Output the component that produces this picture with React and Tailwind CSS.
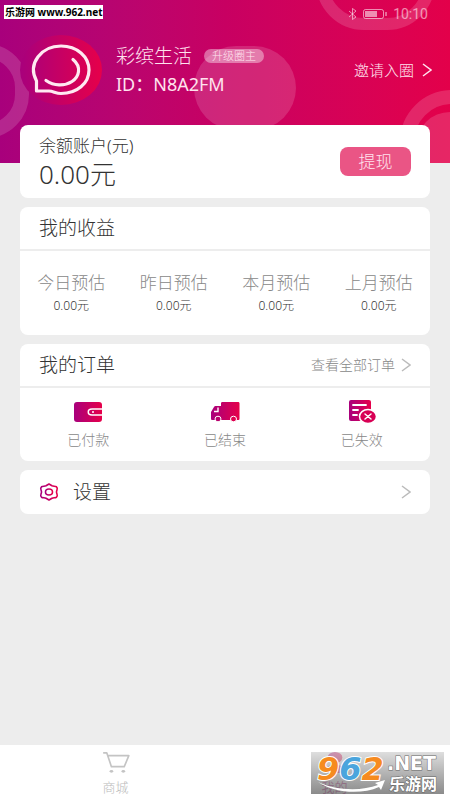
const earnings = [
  { label: "今日预估", value: "0.00元" },
  { label: "昨日预估", value: "0.00元" },
  { label: "本月预估", value: "0.00元" },
  { label: "上月预估", value: "0.00元" },
]

const Gradients = () => (
  <svg className="absolute h-0 w-0" aria-hidden="true">
    <defs>
      <linearGradient id="brand" x1="0" y1="0" x2="1" y2="0">
        <stop offset="0" stopColor="#a8007c" />
        <stop offset="1" stopColor="#e6004a" />
      </linearGradient>
    </defs>
  </svg>
)

const Avatar = () => (
  <svg className="h-[70px] w-[82px] shrink-0" viewBox="0 0 82 70" fill="none">
    <ellipse cx="41" cy="35" rx="41" ry="35" fill="url(#brand)" />
    <path
      d="M16.500 56V46C7 28 22 11 41 11c16 0 28 10.500 28 24S57 58.500 41 58.500c-5 0-8-2.500-12-2.500z"
      stroke="#ffe9f1"
      strokeWidth="3.200"
      strokeLinejoin="round"
    />
    <path d="M53 24.500C62 32 59 42 52 46.500 44 51.500 34 51 26 45.500" stroke="#ffe9f1" strokeWidth="3.200" strokeLinecap="round" />
  </svg>
)

const WalletIcon = () => (
  <svg className="h-6 w-8" viewBox="0 0 32 24" fill="none">
    <rect x="2" y="2" width="28" height="20" rx="3" fill="url(#brand)" />
    <path d="M31 9H20c-5 0-5 6 0 6h11" stroke="#fff" strokeWidth="1.5" />
    <circle cx="21" cy="12" r="1" fill="#fff" />
  </svg>
)

const TruckIcon = () => (
  <svg className="h-6 w-8" viewBox="0 0 32 24">
    <path
      d="M13.500 2h15.500c1 0 1.500 .5 1.500 1.500v15c0 1-.5 1.500-1.500 1.500H3.500c-1 0-1.500-.5-1.500-1.500V12L5 7c.5-.7 1-1 2-1h5V3.500C12 2.500 12.500 2 13.500 2z"
      fill="url(#brand)"
    />
    <path d="M9 7.500v4H5" fill="none" stroke="#fff" strokeWidth="1.4" />
    <ellipse cx="9" cy="19" rx="3" ry="2.800" fill="#b8006c" stroke="#fff" />
    <ellipse cx="24.500" cy="19" rx="3" ry="2.800" fill="#df004f" stroke="#fff" />
  </svg>
)

const InvalidIcon = () => (
  <svg className="h-6 w-8" viewBox="0 0 32 24" fill="none">
    <rect x="3" y="0" width="22" height="21" rx="2" fill="url(#brand)" />
    <path d="M7 5h13M7 10h5M7 15h4" stroke="#fff" strokeWidth="1.8" strokeLinecap="round" />
    <ellipse cx="22" cy="16.500" rx="8.500" ry="7" fill="#d80054" stroke="#fff" strokeWidth="1.5" />
    <path d="M19 14l6 5M25 14l-6 5" stroke="#fff" strokeWidth="1.5" strokeLinecap="round" />
  </svg>
)

const SettingsIcon = () => (
  <svg className="h-[18px] w-5" viewBox="0 0 20 18" fill="none" stroke="url(#brand)" strokeWidth="1.6">
    <path
      d="M10 1l3 1.800c1.500.7 3 .2 4.500 1C19.500 5.500 17.500 7 17.500 9s2 3.500 0 5.200c-1.500.8-3 .3-4.500 1L10 17l-3-1.800c-1.500-.7-3-.2-4.500-1C.5 12.500 2.500 11 2.500 9s-2-3.500 0-5.200c1.500-.8 3-.3 4.500-1z"
      strokeLinejoin="round"
    />
    <ellipse cx="10" cy="9" rx="3.500" ry="3" />
  </svg>
)

const orders = [
  { label: "已付款", Icon: WalletIcon },
  { label: "已结束", Icon: TruckIcon },
  { label: "已失效", Icon: InvalidIcon },
]

const Arrow = ({ className }) => (
  <svg className={className} viewBox="0 0 10 14" fill="none" stroke="currentColor" strokeWidth="1.5">
    <path d="M1 1l8 6-8 6" />
  </svg>
)

const Header = () => (
  <header className="relative h-[163px] overflow-hidden bg-linear-to-r from-[#a8007c] via-[#c80062] to-[#e3004a] text-[#ffe3ee]">
    {/* Decorative rings */}
    <div className="absolute -left-[58px] top-[44px] h-[94px] w-[87px] rounded-full border-[14px] border-white/15"></div>
    <div className="absolute left-[194px] top-[46px] h-[84px] w-[102px] rounded-full bg-white/15"></div>
    <div className="absolute -top-[66px] right-[15px] h-[96px] w-[119px] rounded-full border-[12px] border-white/15"></div>
    <div className="absolute -right-[54px] top-[90px] h-[110px] w-[104px] rounded-full border-[14px] border-white/15"></div>
    <div className="absolute -right-[34px] top-[112px] h-[70px] w-[68px] rounded-full bg-white/15"></div>

    {/* Status bar */}
    <div className="relative flex h-7 items-center justify-end pr-[22px] text-white/55">
      <svg className="mr-[6px] h-3 w-[9px]" viewBox="0 0 9 12" fill="none" stroke="currentColor">
        <path d="M1 3l7 6-3.500 2.500V.5L8 3 1 9" />
      </svg>
      <svg className="mr-[6px] h-[10px] w-6" viewBox="0 0 24 10" fill="none" stroke="currentColor">
        <rect x=".5" y=".5" width="20" height="9" rx="2" />
        <rect x="2" y="2" width="12" height="6" fill="currentColor" stroke="none" />
        <path d="M23 3v4" strokeWidth="1.500" />
      </svg>
      <span className="font-[Roboto] text-sm font-normal">10:10</span>
    </div>

    {/* Profile */}
    <div className="relative flex items-center pl-5 pr-[18px] pt-[7px]">
      <Avatar />
      <div className="ml-[14px] min-w-0 flex-1">
        <div className="flex items-center">
          <h1 className="text-[19px] leading-7">彩缤生活</h1>
          <button className="ml-3 h-[14px] rounded-full bg-white/40 px-2 text-[11px] leading-[14px]">升级圈主</button>
        </div>
        <p className="text-[18px] font-normal leading-7">ID：N8A2FM</p>
      </div>
      <a href="#invite" className="flex items-center text-[15px]">
        邀请入圈
        <Arrow className="ml-2 h-[14px] w-[10px]" />
      </a>
    </div>
  </header>
)

const Watermark = () => (
  <div className="absolute bottom-[6px] right-[6px] h-[42px] w-[133px] bg-linear-to-b from-[#d0d0d0]/70 to-[#777]/85">
    <svg className="h-full w-full overflow-visible" viewBox="0 0 133 42" fontFamily="DejaVu Sans, Noto Sans CJK SC, sans-serif" fontWeight="bold">
      <text x="6" y="28" fontSize="32" fontStyle="italic" fill="#f68b1f" stroke="#fff" strokeWidth="2" paintOrder="stroke">
        9<tspan fill="#4aa5dd">6</tspan>2
      </text>
      <g fill="#fff" stroke="#666" strokeWidth="1" paintOrder="stroke">
        <text x="76" y="18" fontSize="19">.NET</text>
        <text x="78" y="38" fontSize="16">乐游网</text>
      </g>
      <path d="M7 30c19 9 44 9 60 3l-3-2 10-3-4 10-2-3c-18 8-45 6-61-5z" fill="#fff" />
    </svg>
  </div>
)

const TabBar = () => (
  <nav className="relative flex h-[55px] bg-white pt-[7px] text-[13px] leading-[26px]">
    <a href="#mall" className="flex flex-1 flex-col items-center pl-[6px] text-[#bbb]">
      <svg className="h-6 w-[30px]" viewBox="0 0 30 24" fill="none" stroke="#c4c4c4" strokeWidth="1.8">
        <path d="M1 1h4l5 15h14l5-12H6" strokeLinejoin="round" />
        <ellipse cx="10" cy="21" rx="2" ry="1.500" fill="#c4c4c4" stroke="none" />
        <ellipse cx="23" cy="21" rx="2" ry="1.500" fill="#c4c4c4" stroke="none" />
      </svg>
      商城
    </a>
    <a href="#mine" className="flex flex-1 flex-col items-center pr-[6px] font-normal text-[#b00074]">
      <svg className="h-6 w-[30px]" viewBox="0 0 30 24" fill="url(#brand)">
        <ellipse cx="15" cy="6" rx="8" ry="6" />
        <path d="M4 23c0-6 4-9 11-9s11 3 11 9z" />
      </svg>
      我的
    </a>
    <Watermark />
  </nav>
)

export default function App() {
  return (
    <div className="relative flex min-h-screen flex-col bg-[#ededed] font-['Noto_Sans','Noto_Sans_CJK_SC',sans-serif] font-light text-[#333]">
      <Gradients />
      <Header />
      <div className="absolute left-1 top-[5px] bg-white px-px text-[10px] font-bold leading-[14px] text-black">
        乐游网 www.962.net
      </div>

      <main className="relative -mt-[38px] flex flex-1 flex-col gap-[9px] px-5">
        {/* Balance */}
        <section className="flex h-[73px] items-center justify-between rounded-lg bg-white px-[19px]">
          <div>
            <h2 className="text-[17px] leading-6">余额账户(元)</h2>
            <p className="text-[26px] leading-8">0.00元</p>
          </div>
          <button className="h-[29px] w-[71px] rounded-lg bg-[#ea5585] text-[17px] text-[#ffe3ee]">提现</button>
        </section>

        {/* Earnings */}
        <section className="rounded-lg bg-white">
          <h2 className="h-11 border-b-2 border-[#ededed] px-[19px] text-[19px] leading-[43px]">我的收益</h2>
          <dl className="grid grid-cols-4 pb-[18px] pt-5 text-center">
            {earnings.map((item) => (
              <div key={item.label}>
                <dt className="text-[17px] leading-6 text-[#888]">{item.label}</dt>
                <dd className="text-[12px] leading-[22px]">{item.value}</dd>
              </div>
            ))}
          </dl>
        </section>

        {/* Orders */}
        <section className="rounded-lg bg-white">
          <div className="flex h-11 items-center justify-between border-b-2 border-[#ededed] px-[19px]">
            <h2 className="text-[19px]">我的订单</h2>
            <a href="#orders" className="flex items-center text-sm text-[#888]">
              查看全部订单
              <Arrow className="ml-[6px] h-[14px] w-[10px] text-[#bbb]" />
            </a>
          </div>
          <div className="grid grid-cols-3 pb-[9px] pt-3">
            {orders.map(({ label, Icon }) => (
              <button key={label} className="flex flex-col items-center gap-1 text-sm leading-6 text-[#888]">
                <Icon />
                {label}
              </button>
            ))}
          </div>
        </section>

        {/* Settings */}
        <a href="#settings" className="flex h-11 items-center rounded-lg bg-white px-[19px]">
          <SettingsIcon />
          <span className="ml-[14px] flex-1 text-[19px]">设置</span>
          <Arrow className="h-[14px] w-[10px] text-[#bbb]" />
        </a>
      </main>

      <TabBar />
    </div>
  )
}
